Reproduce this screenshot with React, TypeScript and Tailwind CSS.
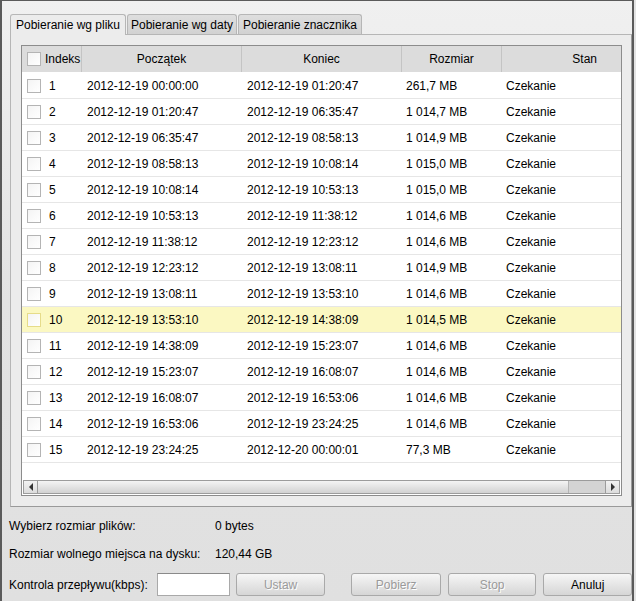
import React from 'react';

const rows = [
  ['1', '2012-12-19 00:00:00', '2012-12-19 01:20:47', '261,7 MB'],
  ['2', '2012-12-19 01:20:47', '2012-12-19 06:35:47', '1 014,7 MB'],
  ['3', '2012-12-19 06:35:47', '2012-12-19 08:58:13', '1 014,9 MB'],
  ['4', '2012-12-19 08:58:13', '2012-12-19 10:08:14', '1 015,0 MB'],
  ['5', '2012-12-19 10:08:14', '2012-12-19 10:53:13', '1 015,0 MB'],
  ['6', '2012-12-19 10:53:13', '2012-12-19 11:38:12', '1 014,6 MB'],
  ['7', '2012-12-19 11:38:12', '2012-12-19 12:23:12', '1 014,6 MB'],
  ['8', '2012-12-19 12:23:12', '2012-12-19 13:08:11', '1 014,9 MB'],
  ['9', '2012-12-19 13:08:11', '2012-12-19 13:53:10', '1 014,6 MB'],
  ['10', '2012-12-19 13:53:10', '2012-12-19 14:38:09', '1 014,5 MB'],
  ['11', '2012-12-19 14:38:09', '2012-12-19 15:23:07', '1 014,6 MB'],
  ['12', '2012-12-19 15:23:07', '2012-12-19 16:08:07', '1 014,6 MB'],
  ['13', '2012-12-19 16:08:07', '2012-12-19 16:53:06', '1 014,6 MB'],
  ['14', '2012-12-19 16:53:06', '2012-12-19 23:24:25', '1 014,6 MB'],
  ['15', '2012-12-19 23:24:25', '2012-12-20 00:00:01', '77,3 MB'],
];

function Box({ active }: { active?: boolean }) {
  return (
    <div
      className={
        'w-[14px] h-[14px] shrink-0 border bg-gradient-to-br from-[#f4f4f4] to-white ' +
        (active ? 'border-[#e6dc8a]' : 'border-[#b4b4b4]')
      }
    />
  );
}

function Button({ label, disabled, className }: { label: string; disabled?: boolean; className: string }) {
  return (
    <div
      className={
        'h-[23px] rounded-[3px] border border-[#a9a9a9] bg-gradient-to-b from-[#f6f6f6] to-[#d6d6d6] flex items-center justify-center ' +
        (disabled ? 'text-[#9a9a9a] [text-shadow:1px_1px_0_#fff] ' : 'text-black ') +
        className
      }
    >
      {label}
    </div>
  );
}

export default function App() {
  return (
    <div className="w-[636px] h-[601px] bg-[#e3e3e3] text-[12px] text-black overflow-hidden" style={{ fontFamily: '"Liberation Sans", Arial, sans-serif' }}>
      <div className="w-[634px] h-[601px] border-l-2 border-t border-r-2 border-[#5a5a5a] bg-gradient-to-b from-[#f0f0f0] via-[#e3e3e3] to-[#e0e0e0] flex flex-col">
        {/* tabs */}
        <div className="flex items-end pl-[8px] pt-[12px] h-[33px] shrink-0">
          <div className="h-[21px] w-[116px] bg-[#ececec] border border-b-0 border-[#b6b6b6] rounded-t-[3px] flex items-center justify-center relative z-10 -mb-px">
            Pobieranie wg pliku
          </div>
          <div className="h-[20px] w-[110px] ml-px bg-gradient-to-b from-[#dedede] to-[#d2d2d2] border border-b-0 border-[#b6b6b6] rounded-t-[3px] flex items-center justify-center">
            Pobieranie wg daty
          </div>
          <div className="h-[20px] w-[124px] ml-px bg-gradient-to-b from-[#dedede] to-[#d2d2d2] border border-b-0 border-[#b6b6b6] rounded-t-[3px] flex items-center justify-center">
            Pobieranie znacznika
          </div>
        </div>

        {/* panel */}
        <div className="ml-[8px] w-[622px] h-[473px] shrink-0 bg-[#ececec] border border-[#b6b6b6] border-r-[#9a9a9a] border-b-[#9a9a9a] pl-[10px] pt-[10px]">
          <div className="w-[601px] h-[451px] border border-[#8c8c8c] bg-white flex flex-col overflow-hidden">
            {/* header */}
            <div className="flex h-[27px] bg-[#dcdcdc] border-b border-white shrink-0">
              <div className="w-[60px] shrink-0 flex items-center pl-[5px] gap-[4px] border-r border-[#c4c4c4]">
                <Box />
                <span>Indeks</span>
              </div>
              <div className="w-[160px] shrink-0 flex items-center justify-center border-r border-[#c4c4c4]">Początek</div>
              <div className="w-[160px] shrink-0 flex items-center justify-center border-r border-[#c4c4c4]">Koniec</div>
              <div className="w-[100px] shrink-0 flex items-center justify-center border-r border-[#c4c4c4]">Rozmiar</div>
              <div className="w-[118px] shrink-0 flex items-center justify-end pr-[23px]">Stan</div>
            </div>

            {/* rows */}
            <div className="flex flex-col">
              {rows.map((r) => {
                const active = r[0] === '10';
                return (
                  <div
                    key={r[0]}
                    className={'flex h-[26px] items-center border-b border-[#e6e6e6] w-[599px] ' + (active ? 'bg-[#fbf8c2]' : '')}
                  >
                    <div className="w-[60px] shrink-0 flex items-center pl-[5px] gap-[8px]">
                      <Box active={active} />
                      <span>{r[0]}</span>
                    </div>
                    <div className="w-[160px] shrink-0 pl-[5px]">{r[1]}</div>
                    <div className="w-[160px] shrink-0 pl-[5px]">{r[2]}</div>
                    <div className="w-[100px] shrink-0 pl-[4px]">{r[3]}</div>
                    <div className="w-[118px] shrink-0 pl-[4px]">Czekanie</div>
                  </div>
                );
              })}
            </div>

            <div className="flex-1" />

            {/* horizontal scrollbar */}
            <div className="h-[14px] mb-px mx-px flex border border-[#9c9c9c] bg-[#d4d4d4] shrink-0">
              <div className="w-[14px] flex items-center justify-center border-r border-[#9c9c9c] bg-gradient-to-b from-[#f2f2f2] to-[#dcdcdc]">
                <div className="w-0 h-0 border-y-[4px] border-y-transparent border-r-[4px] border-r-[#333]" />
              </div>
              <div className="w-[531px] bg-gradient-to-b from-[#f4f4f4] to-[#d2d2d2] border-r border-[#b4b4b4]" />
              <div className="flex-1" />
              <div className="w-[14px] flex items-center justify-center border-l border-[#9c9c9c] bg-gradient-to-b from-[#f2f2f2] to-[#dcdcdc]">
                <div className="w-0 h-0 border-y-[4px] border-y-transparent border-l-[4px] border-l-[#333]" />
              </div>
            </div>
          </div>
        </div>

        {/* info */}
        <div className="pl-[7px] mt-[11px] flex h-[16px] items-center">
          <span className="w-[206px]">Wybierz rozmiar plików:</span>
          <span>0 bytes</span>
        </div>
        <div className="pl-[7px] mt-[12px] flex h-[16px] items-center">
          <span className="w-[206px]">Rozmiar wolnego miejsca na dysku:</span>
          <span>120,44 GB</span>
        </div>
        <div className="pl-[7px] mt-[11px] flex items-center">
          <span className="w-[149px]">Kontrola przepływu(kbps):</span>
          <div className="w-[73px] h-[23px] bg-white border border-[#a9a9a9] border-t-[#8a8a8a]" />
          <Button label="Ustaw" disabled className="w-[90px] ml-[6px]" />
          <Button label="Pobierz" disabled className="w-[90px] ml-[26px]" />
          <Button label="Stop" disabled className="w-[89px] ml-[7px]" />
          <Button label="Anuluj" className="w-[89px] ml-[7px]" />
        </div>
      </div>
    </div>
  );
}
